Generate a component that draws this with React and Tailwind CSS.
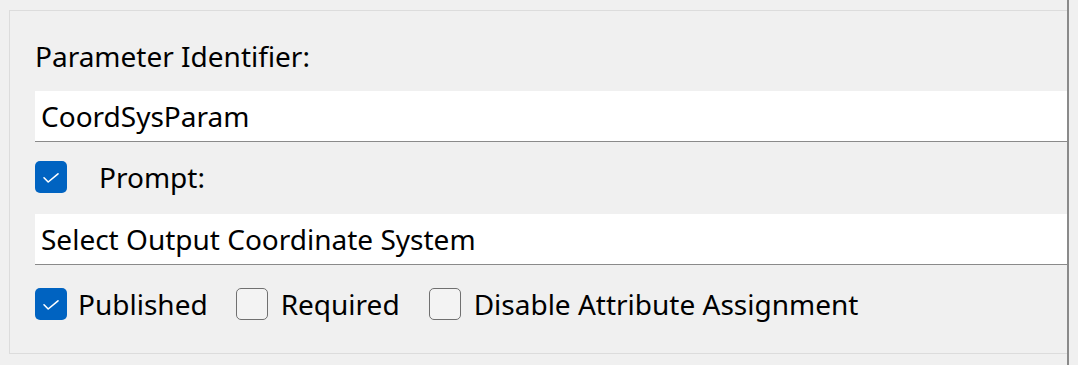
import React from 'react';

const font = { fontFamily: '"Noto Sans", "Open Sans", sans-serif' };

const Check = ({ checked }) =>
  checked ? (
    <span className="block h-[32px] w-[32px] shrink-0 rounded-[5px] bg-[#0063c1]">
      <svg width="32" height="32" viewBox="0 0 32 32" fill="none">
        <polyline points="9,16.8 13.2,21 23,12.8" stroke="#ffffff" strokeWidth="1.6" strokeLinecap="round" strokeLinejoin="round" />
      </svg>
    </span>
  ) : (
    <span className="block h-[32px] w-[32px] shrink-0 rounded-[5px] border border-[#707070] bg-[#f3f3f3]" />
  );

const Field = ({ value, className = '' }) => (
  <div className={`flex h-[51px] items-center border-b border-[#8a8a8a] bg-white pl-[6px] text-[28px] text-black ${className}`}>
    {value}
  </div>
);

export default function App() {
  return (
    <div className="flex h-[365px] w-full bg-[#f0f0f0]" style={font}>
      <div className="flex-1 pl-[9px] pt-[10px]">
        <div className="flex flex-col border-t border-b border-l border-[#dcdcdc] pl-[25px] pb-[29px]">
          <div className="mt-[25px] flex h-[40px] items-center text-[28px] text-black">Parameter Identifier:</div>
          <Field value="CoordSysParam" className="mt-[15px]" />
          <div className="mt-[15px] flex h-[40px] items-center text-[28px] text-black">
            <Check checked />
            <span className="ml-[32px]">Prompt:</span>
          </div>
          <Field value="Select Output Coordinate System" className="mt-[17px]" />
          <div className="mt-[19px] flex h-[40px] items-center text-[28px] text-black">
            <Check checked />
            <span className="ml-[11px]">Published</span>
            <span className="ml-[28px]"><Check /></span>
            <span className="ml-[13px]">Required</span>
            <span className="ml-[29px]"><Check /></span>
            <span className="ml-[13px]">Disable Attribute Assignment</span>
          </div>
        </div>
      </div>
      <div className="w-[2px] bg-[#8a8a8a]" />
      <div className="w-[9px]" />
    </div>
  );
}
